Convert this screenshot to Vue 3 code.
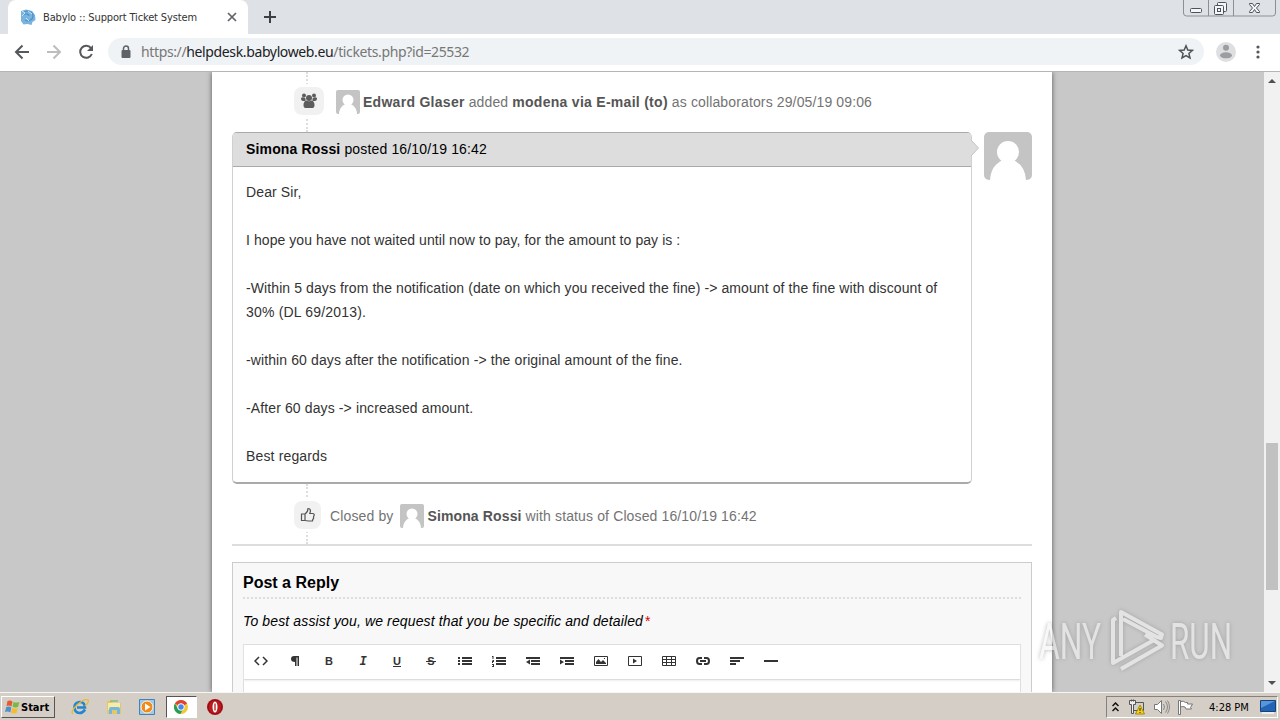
<template>
  <div class="screen">
    <header class="tabstrip">
      <div class="tab">
        <svg class="favicon" width="16" height="16" viewBox="0 0 16 16">
          <path d="M1 2 6 .5 12 2l3 4 .5 5-3 2-1 3-4-1-4 .5L1 12Z" fill="#78b4df" />
          <path d="M4 3c5-2 9 0 9 4s-5 6-8 4M3 6c3-2 6-1 6 1" fill="none" stroke="#4f93c8" stroke-width="1.3" />
          <path d="m2 2 3 2-3 3m6-5 4 3M6 9l3 3" fill="none" stroke="#c9e5f7" />
        </svg>
        <span class="tab-title">Babylo :: Support Ticket System</span>
        <svg class="tab-close" width="10" height="10" viewBox="0 0 10 10"><path d="m1 1 8 8M9 1 1 9" stroke="#5f6368" stroke-width="1.7" /></svg>
      </div>
      <svg class="new-tab" width="12" height="12" viewBox="0 0 12 12"><path d="M6 0v12M0 6h12" stroke="#3c4043" stroke-width="2" /></svg>
      <svg class="window-buttons" width="93" height="17" viewBox="0 0 93 17">
        <path d="M.5 0v13q0 3 3 3h86q3 0 3-3V0M25.500 0v16M50.500 0v16" fill="none" stroke="#8b8f98" />
        <g fill="#f5f6f8" stroke="#4d535d">
          <rect x="7.500" y="8.500" width="11" height="4" rx="1" />
          <rect x="34.500" y="2.500" width="9" height="9" rx="1" />
          <rect x="31.500" y="5.500" width="9" height="9" rx="1" />
          <rect x="34.500" y="8.500" width="3" height="3" />
          <path d="M66.500 3.500h3l2 3 2-3h3v1l-3 3.500 3 3.500v1h-3l-2-3-2 3h-3v-1l3-3.500-3-3.500Z" />
        </g>
      </svg>
    </header>

    <nav class="toolbar">
      <svg class="nav-icon" width="16" height="16" viewBox="0 0 16 16"><path d="M15 8H2m6.500-6.500L2 8l6.500 6.500" fill="none" stroke="#55585c" stroke-width="2" /></svg>
      <svg class="nav-icon" width="16" height="16" viewBox="0 0 16 16"><path d="M1 8h13M7.500 1.500 14 8l-6.500 6.500" fill="none" stroke="#bbbdbf" stroke-width="2" /></svg>
      <svg class="nav-icon" width="16" height="16" viewBox="0 0 16 16"><path d="M13 4.200A6 6 0 1 0 13.800 10" fill="none" stroke="#55585c" stroke-width="2" /><path d="M15 1v6H9Z" fill="#55585c" /></svg>
      <div class="address">
        <svg width="10" height="14" viewBox="0 0 10 14"><path d="M2.500 5V3.500a2.500 2.500 0 0 1 5 0V5" fill="none" stroke="#5f6368" stroke-width="1.500" /><rect x="0.500" y="5" width="9" height="8" rx="1" fill="#5f6368" /></svg>
        <span class="url">https://<b>helpdesk.babyloweb.eu</b>/tickets.php?id=25532</span>
        <svg class="star" width="16" height="16" viewBox="0 0 16 16"><path d="m8 1.800 1.800 4.200 4.600.4-3.500 3 1.100 4.500L8 11.500 4 13.900l1.100-4.500-3.500-3L6.200 6Z" fill="none" stroke="#4f5357" stroke-width="1.500" /></svg>
      </div>
      <svg class="profile" width="20" height="20" viewBox="0 0 20 20"><circle cx="10" cy="10" r="10" fill="#dedfe1" /><circle cx="10" cy="5.800" r="3" fill="#9b9da0" /><ellipse cx="10" cy="13.300" rx="6" ry="3" fill="#9b9da0" /></svg>
      <svg class="menu" width="4" height="14" viewBox="0 0 4 14"><g fill="#55585c"><circle cx="2" cy="2" r="1.600" /><circle cx="2" cy="7" r="1.600" /><circle cx="2" cy="12" r="1.600" /></g></svg>
    </nav>

    <main class="viewport">
      <div class="page">
        <div class="event event-top">
          <span class="badge">
            <svg width="16" height="16" viewBox="0 0 16 16" fill="#5d5d5d">
              <circle cx="3" cy="2.500" r="2" /><circle cx="13" cy="2.500" r="2" /><circle cx="8" cy="5" r="3" />
              <path d="M0 5q1-1 2.500-.5 1.500.2 2 1L4.500 8H2Q0 8 0 5Zm16 0q-1-1-2.500-.5-1.500.2-2 1V8H14q2 0 2-3ZM2.500 12q0-4 3-4.500 2.500 1.500 5 0 3 .5 3 4.500 0 3-2 3h-7q-2 0-2-3Z" />
            </svg>
          </span>
          <svg class="avatar-sm" viewBox="0 0 48 48"><path d="M0 0h48v48H0Z" fill="#c4c4c4" /><circle cx="24" cy="20" r="11" fill="#fff" /><path d="M6 48q1-15 13-20h10q12 5 13 20Z" fill="#fff" /></svg>
          <span class="event-text"><b>Edward Glaser</b> added <b>modena via E-mail (to)</b> as collaborators 29/05/19 09:06</span>
        </div>

        <div class="post-row">
          <article class="post">
            <h2 class="post-head"><b>Simona Rossi</b> posted 16/10/19 16:42</h2>
            <svg class="pointer" width="8" height="16" viewBox="0 0 8 16"><path d="M0 0v16l7.500-8Z" fill="#ddd" /><path d="m0 0 7.500 8L0 16" fill="none" stroke="#c4c4c4" /></svg>
            <div class="post-body">
              <div v-for="(line, i) in message" :key="i" class="line"><span :style="{ letterSpacing: line.spacing + 'px' }">{{ line.text }}</span></div>
            </div>
          </article>
          <svg class="avatar" viewBox="0 0 48 48"><path d="M0 0h48v48H0Z" fill="#c4c4c4" /><circle cx="24" cy="20" r="11" fill="#fff" /><path d="M6 48q1-15 13-20h10q12 5 13 20Z" fill="#fff" /></svg>
        </div>

        <div class="event event-bottom">
          <span class="badge">
            <svg width="16" height="16" viewBox="0 0 16 16"><path d="M5 7q3-2 3-5.500 2.500 0 2.500 2.500l-.7 2.500H13q1.700.5 1 2l-.5 1.500.1 1.500-.9 1-.2 1.500H8.500L5 13.500H1.500V7Zm0 0v6.500" fill="none" stroke="#555" stroke-width="1.200" /></svg>
          </span>
          <span class="event-text closed">Closed by</span>
          <svg class="avatar-sm" viewBox="0 0 48 48"><path d="M0 0h48v48H0Z" fill="#c4c4c4" /><circle cx="24" cy="20" r="11" fill="#fff" /><path d="M6 48q1-15 13-20h10q12 5 13 20Z" fill="#fff" /></svg>
          <span class="event-text"><b>Simona Rossi</b> with status of Closed 16/10/19 16:42</span>
        </div>

        <section class="reply">
          <h3>Post a Reply</h3>
          <p class="hint"><em>To best assist you, we request that you be specific and detailed</em><span class="required">*</span></p>
          <div class="editor">
            <div class="editor-bar">
              <svg v-for="icon in tools" :key="icon.name" class="tool" viewBox="0 0 14 12">
                <text v-if="icon.glyph" x="7" y="10" text-anchor="middle" class="glyph" :class="icon.name">{{ icon.glyph }}</text>
                <path v-if="icon.stroke" :d="icon.stroke" fill="none" stroke="#333" :stroke-width="icon.width || 2" />
                <path v-if="icon.fill" :d="icon.fill" fill="#333" />
              </svg>
            </div>
          </div>
        </section>
      </div>

      <aside class="scrollbar">
        <svg width="16" height="18" viewBox="0 0 16 18"><path d="m4 11 4-4 4 4Z" fill="#505050" /></svg>
        <div class="thumb"></div>
        <svg class="scroll-down" width="16" height="18" viewBox="0 0 16 18"><path d="m4 7 4 4 4-4Z" fill="#505050" /></svg>
      </aside>
    </main>

    <footer class="taskbar">
      <button class="start">
        <svg width="17" height="16" viewBox="0 0 16 16"><path d="M3 2q3-1 5 .5L7 7.500Q4.500 6 2 7Z" fill="#e8592b" /><path d="M9 3q3 1 6 0l-1.500 5Q10.500 9 8 7.700Z" fill="#78b943" /><path d="M1.800 8q3-1 5 .5l-1 5Q3.500 12 .5 13Z" fill="#4a91d2" /><path d="M7.700 9q3 1 5.500 0l-1.200 5q-3 1-5.500-.3Z" fill="#f5bd2e" /></svg>
        <span>Start</span>
      </button>
      <div class="launch">
        <svg viewBox="0 0 18 18"><path d="M14 11.500Q12 15 8.500 15 3.500 14.500 3.500 9.500t5-5.500 5.500 5.500H6" fill="none" stroke="#2386d1" stroke-width="2.600" /><path d="M2 16Q-1 14 6 7t11-5q1.500 2-3 6" fill="none" stroke="#e8b936" stroke-width="1.300" /></svg>
        <svg viewBox="0 0 18 18"><path d="M2 3h5l1 2h8v11H2Z" fill="#e6c767" /><path d="M3 5h12v7H3Z" fill="#f8eba6" /><path d="M4 16v-5q0-2 2-2h7q2 0 2 2v5h-3v-4H7v4Z" fill="#73b7dd" /><path d="M5 3h8" stroke="#62b44d" /></svg>
        <svg viewBox="0 0 18 18"><path d="M1.500 1.500h15v15h-15Z" fill="#9bcaf0" stroke="#4680b5" /><circle cx="9" cy="9" r="6" fill="#f18a19" stroke="#fff3cf" /><path d="m7 5.500 5.500 3.500L7 12.500Z" fill="#fff" /></svg>
        <span class="active-app">
          <svg viewBox="0 0 18 18"><circle cx="9" cy="9" r="7" fill="#f1c933" /><path d="M9 9 2.900 5.500A7 7 0 0 1 15.100 5.500Z" fill="#dc4437" /><path d="M2.900 5.500A7 7 0 0 0 8.500 16L11 11 6 11Z" fill="#249e59" /><circle cx="9" cy="9" r="3.300" fill="#4888ec" stroke="#fff" /></svg>
        </span>
        <svg viewBox="0 0 18 18"><circle cx="9" cy="9" r="8" fill="#b9191e" /><circle cx="9" cy="9" r="7" fill="none" stroke="#8e0b12" /><ellipse cx="9" cy="9" rx="2.500" ry="5.500" fill="#fff" /><path d="M9 5.500v7" stroke="#b9191e" stroke-width="1.300" /></svg>
      </div>
      <div class="tray">
        <svg class="chevrons" width="7" height="10" viewBox="0 0 7 10"><path d="m.5 4 3-3 3 3m-6 5 3-3 3 3" fill="none" stroke="#111" stroke-width="1.500" /></svg>
        <svg class="network" width="16" height="16" viewBox="0 0 16 16"><path d="M4.500 3.500h10v8h-10Zm2 11h6" fill="#d0d0cb" stroke="#555" /><path d="M.5 1.500h6v4h-2v9h-2v-9h-2Zm2-1v2m2-2v2" fill="#eee" stroke="#555" /><path d="m11 6 4.500 9h-9Z" fill="#f6d21d" stroke="#a98a00" /><path d="M11 9v3m0 1v1" stroke="#222" /></svg>
        <svg class="sound" width="17" height="16" viewBox="0 0 17 16"><path d="M1.500 5.500h3l4-4v13l-4-4h-3Z" fill="#fff" stroke="#777" /><path d="M10.500 5q2 3 0 6m2-8.500q4 5.500 0 11m2-12q4 6.500 0 13" fill="none" stroke="#888" /></svg>
        <svg class="flag" width="17" height="16" viewBox="0 0 17 16"><path d="M1.500 15.500v-14h2v14Zm2-13q3-1 5 1h2v1.500h5l-2 3.500 1 1.500H9l-1-2q-2-1-4.500 0Z" fill="#fff" stroke="#777" /></svg>
        <span class="clock">4:28 PM</span>
        <svg class="desktop" width="16" height="14" viewBox="0 0 16 14"><path d="M.5.5h15v11H.5Z" fill="#2464b5" stroke="#16437c" /><path d="M1 1h14L1 8Z" fill="#5796dc" /><path d="M2 13h12" stroke="#eee" stroke-width="2" /></svg>
      </div>
    </footer>

    <svg class="watermark" width="210" height="74" viewBox="0 0 210 74">
      <g class="mark-text">
        <text x="9" y="55" textLength="62" lengthAdjust="spacingAndGlyphs">ANY</text>
        <text x="140" y="55" textLength="62" lengthAdjust="spacingAndGlyphs">RUN</text>
      </g>
      <path d="M91 52V8l41 22.500-1 3.500-4-1L93 15M86 14l-3 2v43l41-23M91 65l41-23.500-17-11" class="mark-line" />
    </svg>
  </div>
</template>

<script setup>
const message = [
  { text: 'Dear Sir,', spacing: 0.12 },
  { text: '', spacing: 0 },
  { text: 'I hope you have not waited until now to pay, for the amount to pay is :', spacing: 0.07 },
  { text: '', spacing: 0 },
  { text: '-Within 5 days from the notification (date on which you received the fine) -> amount of the fine with discount of', spacing: 0.095 },
  { text: '30% (DL 69/2013).', spacing: 0.18 },
  { text: '', spacing: 0 },
  { text: '-within 60 days after the notification -> the original amount of the fine.', spacing: 0.11 },
  { text: '', spacing: 0 },
  { text: '-After 60 days -> increased amount.', spacing: 0.12 },
  { text: '', spacing: 0 },
  { text: 'Best regards', spacing: 0.15 }
]

const tools = [
  { name: 'code', stroke: 'M5 2 1 6l4 4M9 2l4 4-4 4', width: 1.5 },
  { name: 'paragraph', fill: 'M11 1v10H9.500V2.500H8.500V11H7V7Q3 7 3 4t3-3Z' },
  { name: 'bold', glyph: 'B' },
  { name: 'italic', glyph: 'I' },
  { name: 'underline', glyph: 'U', stroke: 'M3 11.500h8', width: 1 },
  { name: 'strike', glyph: 'S', stroke: 'M2 6.500h10', width: 1 },
  { name: 'bullets', fill: 'M0 2h2v2H0ZM0 5h2v2H0ZM0 8h2v2H0ZM4 2h10v2H4ZM4 5h10v2H4ZM4 8h10v2H4Z' },
  { name: 'numbers', fill: 'M0 1h1.500v3h-1V2H0ZM0 5h2v2H1v1H0V6h1ZM0 9h2v3H0v-1h1v-1H0ZM4 2h10v2H4ZM4 5h10v2H4ZM4 8h10v2H4Z' },
  { name: 'outdent', fill: 'M0 2h14v2H0ZM5 5h9v2H5ZM5 8h9v2H5ZM0 7l4-2.500v5Z' },
  { name: 'indent', fill: 'M0 2h14v2H0ZM5 5h9v2H5ZM5 8h9v2H5ZM4 7 0 4.500v5Z' },
  { name: 'image', stroke: 'M.5 1.500h13v9H.5Z', width: 1, fill: 'M2 9V7l2.500-3L7 7l2-2 3 3v1ZM10 3h1v1h-1Z' },
  { name: 'video', stroke: 'M.5 1.500h13v9H.5Z', width: 1, fill: 'm5 3.500 4 2.500-4 2.500Z' },
  { name: 'table', stroke: 'M.5 1.500h13v9H.5ZM0 4.500h14M0 7.500h14M4.500 1v10M9.500 1v10', width: 1 },
  { name: 'link', stroke: 'M6 9H3.500Q1 9 1 6t2.500-3H6M8 3h2.500Q13 3 13 6t-2.500 3H8M4 6h6' },
  { name: 'align', fill: 'M0 2h14v2H0ZM0 5h10v2H0ZM0 8h6v2H0Z' },
  { name: 'rule', stroke: 'M0 6h14', width: 2 }
]
</script>

<style>
body {
  overflow: hidden;
}
</style>

<style scoped>
* {
  box-sizing: border-box;
}

.screen {
  position: relative;
  display: flex;
  flex-direction: column;
  width: 1280px;
  height: 720px;
  overflow: hidden;
  font-family: "Liberation Sans", Arial, sans-serif;
  font-size: 14px;
  color: #333;
}

svg {
  display: block;
  flex: none;
}

.tabstrip {
  display: flex;
  flex: 0 0 34px;
  padding-left: 8px;
  background: #dee1e6;
}

.tab {
  display: flex;
  align-items: center;
  width: 240px;
  height: 34px;
  padding: 0 11px 0 12px;
  background: #fff;
  border-radius: 8px 8px 0 0;
}

.tab-title {
  margin-left: 7px;
  font: 11px "DejaVu Sans Condensed", "DejaVu Sans", sans-serif;
  letter-spacing: -0.14px;
  white-space: nowrap;
}

.tab-close {
  margin-left: auto;
}

.new-tab {
  margin: 11px 0 0 16px;
}

.window-buttons {
  margin-left: auto;
  margin-right: 4px;
}

.toolbar {
  display: flex;
  flex: 0 0 38px;
  align-items: center;
  padding: 0 20px 2px 14px;
  border-bottom: 1px solid #b4b6b5;
  background: #fff;
}

.nav-icon {
  margin-right: 16px;
}

.address {
  display: flex;
  align-items: center;
  width: 1096px;
  height: 27px;
  margin-left: -2px;
  padding: 0 10px 0 13px;
  border-radius: 14px;
  background: #f0f3f5;
}

.url {
  margin-left: 10px;
  color: #777;
  font: 14px "Noto Sans", sans-serif;
  letter-spacing: -0.37px;
  white-space: nowrap;
}

.url b {
  color: #202124;
  font-weight: 400;
}

.star {
  margin-left: auto;
}

.profile {
  margin-left: 12px;
}

.menu {
  margin-left: auto;
}

.viewport {
  display: flex;
  flex: 0 0 620px;
  padding-left: 212px;
  overflow: hidden;
  background: #c8c8c8;
}

.page {
  width: 840px;
  padding: 0 20px;
  background: #fff;
  box-shadow: 0 0 5px #555;
}

.event {
  position: relative;
  display: flex;
  align-items: center;
  color: #737373;
  letter-spacing: 0.13px;
  white-space: nowrap;
}

.event::before {
  position: absolute;
  top: 0;
  bottom: 0;
  left: 74px;
  content: "";
  border-left: 2px dotted #ddd;
}

.event b {
  color: #555;
}

.event-top {
  height: 60px;
  padding: 0 0 2px 62px;
}

.event-top b {
  letter-spacing: 0.28px;
}

.event-top .event-text {
  margin-top: 2px;
}

.badge {
  position: relative;
  display: flex;
  align-items: center;
  justify-content: center;
  width: 30px;
  height: 28px;
  background: #f1f1f1;
  border-radius: 8px;
  box-shadow: 0 0 0 3px #fff;
}

.avatar-sm {
  width: 24px;
  height: 24px;
  border-radius: 2px;
}

.event-top .avatar-sm {
  margin: 2px 3px 0 12px;
}

.post-row {
  display: flex;
  justify-content: space-between;
  align-items: flex-start;
}

.post {
  position: relative;
  width: 740px;
  height: 352px;
  border: 1px solid #d0d0d0;
  border-top-color: #aaa;
  border-bottom: 2px solid #aaa;
  border-radius: 5px;
}

.post-head {
  height: 34px;
  margin: 0;
  padding: 0 13px;
  background: #ddd;
  border-bottom: 1px solid #aaa;
  border-radius: 4px 4px 0 0;
  color: #000;
  font-size: 14px;
  font-weight: 400;
  letter-spacing: 0.15px;
  line-height: 32px;
}

.pointer {
  position: absolute;
  top: 7px;
  right: -8px;
}

.post-body {
  padding: 13px 13px 0;
}

.line {
  height: 24px;
  line-height: 24px;
  white-space: nowrap;
}

.avatar {
  width: 48px;
  height: 48px;
  border-radius: 5px;
}

.event-bottom {
  height: 62px;
  padding: 2px 0 0 62px;
  border-bottom: 2px solid #ddd;
}

.event-bottom .badge {
  width: 27px;
}

.event-bottom .event-text {
  margin-top: 2px;
}

.event-bottom .closed {
  margin-left: 9px;
}

.event-bottom .avatar-sm {
  margin: 1px 3px 0 7px;
}

.reply {
  height: 160px;
  margin-top: 16px;
  padding: 0 10px;
  background: #f8f8f8;
  border: 1px solid #ccc;
}

.reply h3 {
  height: 36px;
  margin: 0;
  border-bottom: 2px dotted #ddd;
  color: #000;
  font-size: 16px;
  line-height: 39px;
}

.hint {
  height: 45px;
  margin: 0;
  color: #000;
  letter-spacing: 0.13px;
  line-height: 45px;
  white-space: nowrap;
}

.required {
  margin-left: 2px;
  color: #d00;
}

.editor {
  height: 80px;
  background: #fff;
  border: 1px solid #ddd;
}

.editor-bar {
  display: flex;
  gap: 20px;
  height: 35px;
  padding: 10px 10px 0;
  border-bottom: 1px solid #ddd;
  box-shadow: 0 1px 2px #eee;
}

.tool {
  width: 14px;
  height: 12px;
}

.glyph {
  fill: #333;
  font: bold 11px "Liberation Sans", sans-serif;
}

.glyph.italic {
  font: italic bold 12px "Liberation Mono", monospace;
}

.scrollbar {
  display: flex;
  flex-direction: column;
  width: 16px;
  margin-left: auto;
  background: #f1f1f1;
}

.thumb {
  width: 12px;
  height: 147px;
  margin: 353px auto 0;
  background: #c1c1c1;
}

.scroll-down {
  margin-top: auto;
}

.taskbar {
  display: flex;
  flex: 0 0 28px;
  align-items: center;
  padding: 1px 2px 0 1px;
  background: #d5cec6;
  border-top: 1px solid #f7f5f1;
}

.start {
  display: flex;
  align-items: center;
  width: 54px;
  height: 22px;
  padding: 0 2px;
  background: #d5cec6;
  border: 1px solid;
  border-color: #fff #555 #555 #fff;
  color: #000;
  font: bold 11px "DejaVu Sans Condensed", sans-serif;
}

.launch {
  display: flex;
  align-items: center;
  gap: 15.5px;
  margin-left: 16px;
}

.launch svg {
  width: 18px;
  height: 18px;
}

.active-app {
  display: flex;
  align-items: center;
  justify-content: center;
  width: 31px;
  height: 22px;
  margin: 0 -6px;
  background: #fff;
  border: 1px solid;
  border-color: #555 #fff #fff #555;
}

.tray {
  display: flex;
  align-items: center;
  width: 172px;
  height: 22px;
  margin-left: auto;
  padding-left: 5px;
  border: 1px solid;
  border-color: #85817b #fff #fff #85817b;
}

.network {
  margin-left: 10px;
}

.sound {
  margin-left: 8px;
}

.flag {
  margin-left: 7px;
}

.clock {
  width: 41px;
  margin-left: 15px;
  color: #000;
  font: 11px "DejaVu Sans Condensed", sans-serif;
  white-space: nowrap;
}

.desktop {
  margin-left: 10px;
}

.watermark {
  position: absolute;
  top: 604px;
  left: 1030px;
  overflow: visible;
  opacity: 0.6;
  filter: drop-shadow(0 0 2px #888);
}

.mark-text {
  fill: #f5f5f5;
  font: 400 50px Roboto, sans-serif;
}

.mark-line {
  fill: none;
  stroke: #f5f5f5;
  stroke-width: 4;
  stroke-linejoin: round;
}
</style>
